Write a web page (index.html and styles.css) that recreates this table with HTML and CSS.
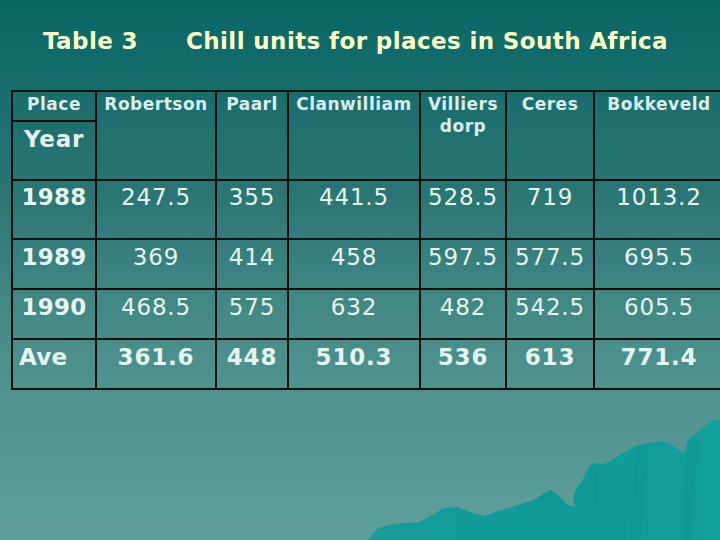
FILE: index.html
```html
<!DOCTYPE html>
<html>
<head>
<meta charset="utf-8">
<link rel="stylesheet" href="styles.css">
</head>
<body>
<div class="slide">
  <svg class="hills" viewBox="0 0 720 540" width="720" height="540" aria-hidden="true">
    <defs>
      <linearGradient id="hg" x1="0" y1="0" x2="1" y2="0">
        <stop offset="0" stop-color="#169c99"/>
        <stop offset="0.5" stop-color="#0f9996"/>
        <stop offset="1" stop-color="#129e9b"/>
      </linearGradient>
    </defs>
    <path fill="url(#hg)" d="M368 540 L378 528 L392 524 L420 522 L432 515 L444 508 L458 507 L470 512 L484 516 L498 511 L512 507 L524 503 L534 500 L540 496 L546 492 L551 490 L557 494 L563 500 L568 505 L575 507 L573 498 L576 489 L582 481 L590 465 L596 463 L604 464 L612 460 L620 455 L628 450 L636 446 L650 443 L662 441 L670 444 L679 450 L684 453 L686 447 L688 440 L700 431 L711 421 L720 420 L720 540 Z"/>
    <path fill="#0d9592" opacity="0.5" d="M590 465 L596 463 L600 540 L588 540 Z M636 446 L650 443 L640 540 L630 540 Z M688 440 L700 431 L690 540 L682 540 Z M546 492 L551 490 L545 540 L538 540 Z"/>
  </svg>
  <header class="title">
    <span class="t-num">Table 3</span>
    <span class="t-text">Chill units for places in South Africa</span>
  </header>
  <table class="grid">
    <colgroup>
      <col class="c1"><col class="c2"><col class="c3"><col class="c4"><col class="c5"><col class="c6"><col class="c7">
    </colgroup>
    <thead>
      <tr class="h1">
        <th class="place">Place</th>
        <th rowspan="2">Robertson</th>
        <th rowspan="2">Paarl</th>
        <th rowspan="2">Clanwilliam</th>
        <th rowspan="2">Villiers<br>dorp</th>
        <th rowspan="2">Ceres</th>
        <th rowspan="2">Bokkeveld</th>
      </tr>
      <tr class="h2">
        <th class="year">Year</th>
      </tr>
    </thead>
    <tbody>
      <tr class="r1988">
        <th class="yr">1988</th><td>247.5</td><td>355</td><td>441.5</td><td>528.5</td><td>719</td><td>1013.2</td>
      </tr>
      <tr>
        <th class="yr">1989</th><td>369</td><td>414</td><td>458</td><td>597.5</td><td>577.5</td><td>695.5</td>
      </tr>
      <tr>
        <th class="yr">1990</th><td>468.5</td><td>575</td><td>632</td><td>482</td><td>542.5</td><td>605.5</td>
      </tr>
      <tr class="ave">
        <th class="yr ave-l">Ave</th><td>361.6</td><td>448</td><td>510.3</td><td>536</td><td>613</td><td>771.4</td>
      </tr>
    </tbody>
  </table>
</div>
</body>
</html>
```
FILE: styles.css
```css
html, body {
  margin: 0;
  padding: 0;
  width: 720px;
  height: 540px;
  overflow: hidden;
}
body {
  font-family: "DejaVu Sans", Verdana, sans-serif;
  background: linear-gradient(180deg, #086765 0%, #2a7573 35%, #4b8f8c 65%, #5f9e9b 100%);
}
.slide {
  position: relative;
  width: 720px;
  height: 540px;
  overflow: hidden;
}
.hills {
  position: absolute;
  left: 0;
  top: 0;
}
.title {
  position: relative;
  height: 90px;
  display: flex;
  align-items: flex-start;
  padding: 28px 0 0 43px;
  box-sizing: border-box;
  gap: 48px;
  color: #ffffc8;
  font-weight: bold;
  font-size: 23px;
  letter-spacing: 0.4px;
}
.grid {
  position: relative;
  margin-left: 11px;
  border-collapse: collapse;
  table-layout: fixed;
  width: 712px;
  color: #e6f4f3;
}
.c1 { width: 84px; }
.c2 { width: 120px; }
.c3 { width: 72px; }
.c4 { width: 132px; }
.c5 { width: 86px; }
.c6 { width: 88px; }
.c7 { width: 130px; }
.grid th, .grid td {
  border: 2px solid #050d0d;
  padding: 0;
  text-align: center;
  vertical-align: top;
}
.grid thead th {
  font-size: 17px;
  font-weight: bold;
  letter-spacing: 0.5px;
  color: #d8eef0;
  line-height: 22px;
  padding-top: 1px;
}
.h1 { height: 30px; }
.h2 { height: 59px; }
.grid thead .year {
  font-size: 23px;
  letter-spacing: 0.8px;
  line-height: 26px;
  padding-top: 4px;
  color: #e6f2f2;
}
.grid tbody td, .grid tbody th {
  font-size: 23px;
  letter-spacing: 0.8px;
  line-height: 28px;
  padding-top: 3px;
}
.grid tbody td {
  font-weight: normal;
}
.grid tbody tr { height: 50px; }
.grid tbody tr.r1988 { height: 59px; }
.grid tbody tr.r1988 td, .grid tbody tr.r1988 th { padding-top: 2px; }
.grid tbody .yr {
  font-weight: bold;
  letter-spacing: 0.3px;
  text-align: center;
}
.grid tbody .ave-l {
  text-align: left;
  padding-left: 6px;
}
.grid .ave td {
  font-weight: bold;
}
```
